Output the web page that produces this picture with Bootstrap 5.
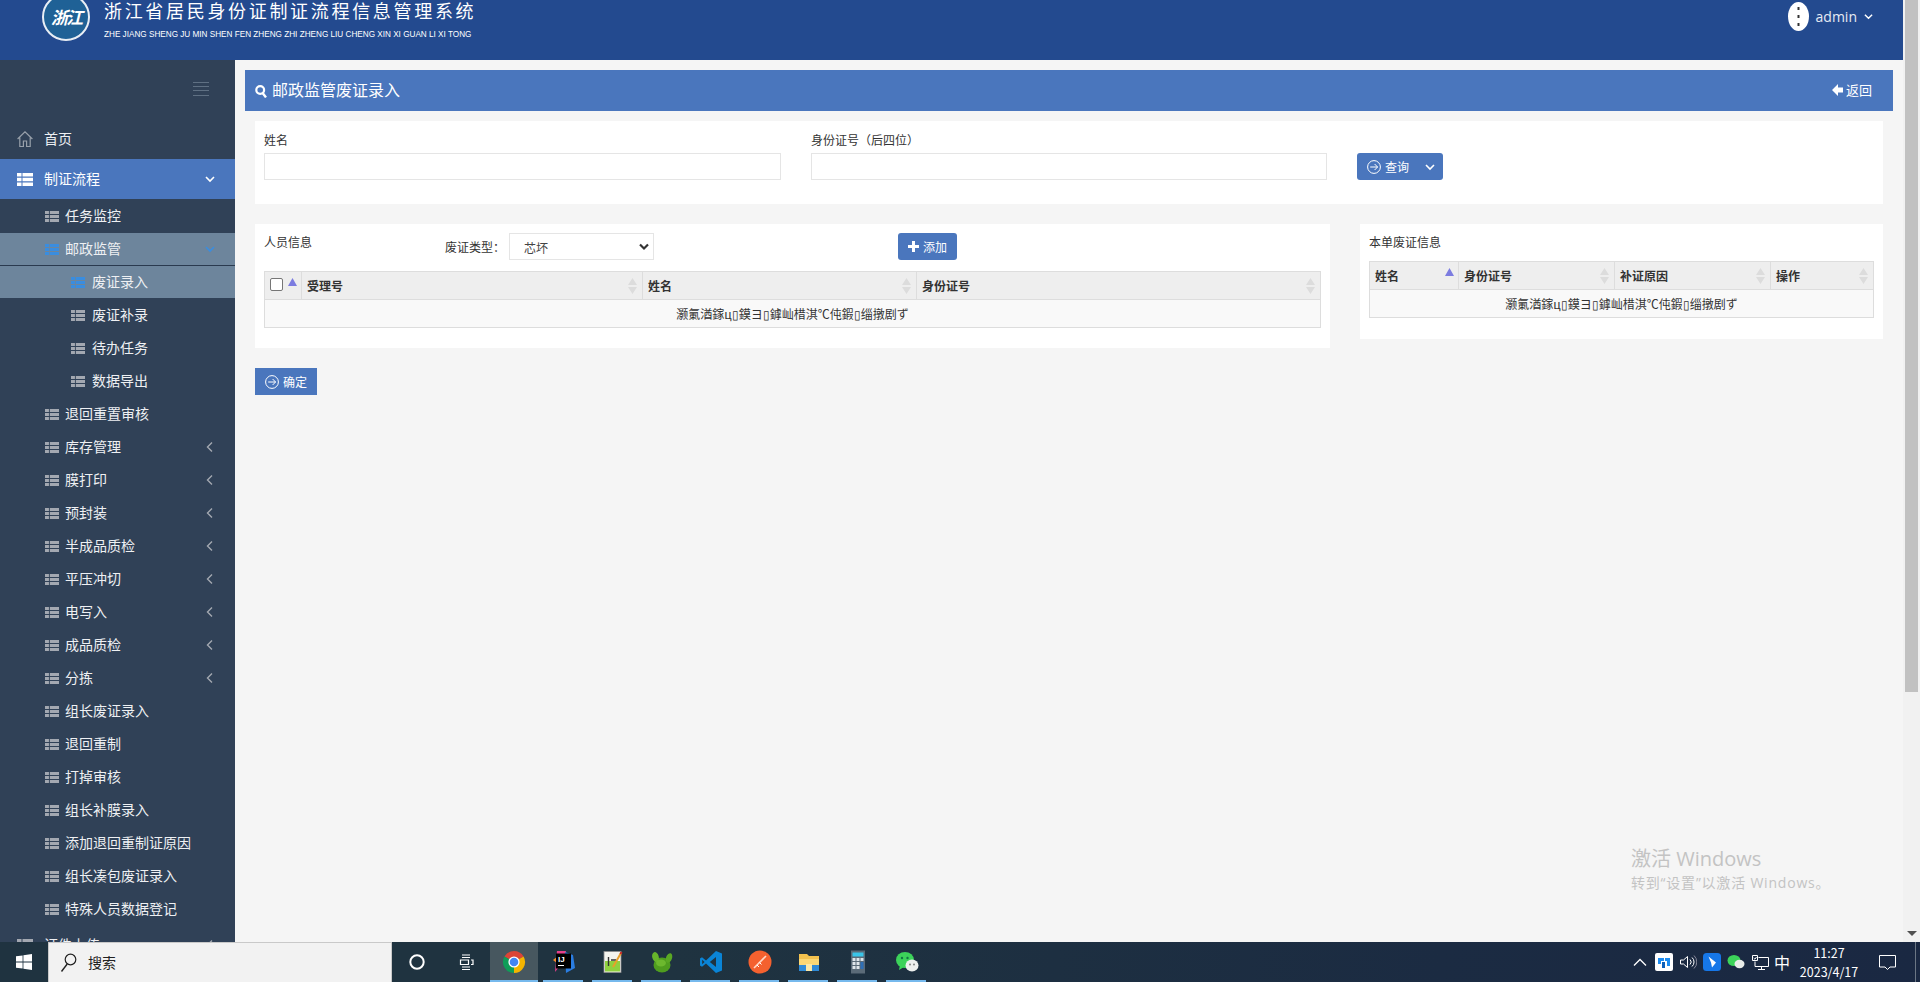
<!DOCTYPE html>
<html lang="zh-CN">
<head>
  <meta charset="UTF-8">
  <title>邮政监管废证录入</title>
  <meta name="viewport" content="width=device-width, initial-scale=1">
  <link href="https://cdn.jsdelivr.net/npm/bootstrap@5.3.0/dist/css/bootstrap.min.css" rel="stylesheet">
  <style>
    :root {
      --side-bg: #304157;
      --side-line: #2a3a4f;
      --brand: #4a76bd;
      --head-bg: #234a8f;
      --page-bg: #f5f5f5;
    }

    html, body { height: 100%; }

    body {
      font-family: "Noto Sans CJK SC", "Liberation Sans", sans-serif;
      font-size: 12px;
      color: #333;
      background: var(--page-bg);
      overflow: hidden;
    }

    /* page + fake browser scrollbar */
    .app-area { height: 942px; }
    .app-page { width: 1903px; }
    .sys-scroll { width: 17px; background: #f1f1f1; }
    .sys-thumb { height: 692px; margin: 0 2px; background: #c1c1c1; }
    .sys-arrow {
      width: 0; height: 0; margin: 0 auto 6px;
      border-left: 5px solid transparent;
      border-right: 5px solid transparent;
      border-top: 5px solid #505050;
    }

    /* top header */
    .app-head { height: 60px; background: var(--head-bg); color: #fff; overflow: hidden; flex: none; }
    .logo-disc {
      width: 48px; height: 48px; margin: -7px 14px 0 42px; flex: none;
      border: 2px solid #e8eef5; border-radius: 50%;
      background: #1f6196; color: #fff;
      font-size: 17px; font-weight: 700; font-style: italic; line-height: 44px;
      letter-spacing: -2px; text-align: center;
    }
    .sys-title { font-size: 18px; line-height: 22px; letter-spacing: 2.68px; white-space: nowrap; margin-top: -1px; }
    .sys-sub {
      font-family: "Liberation Sans", sans-serif; font-size: 9.5px; line-height: 12px; margin-top: 7px;
      white-space: nowrap; transform: scaleX(.86); transform-origin: left center;
    }
    .user-box { margin-right: 30px; margin-top: 2px; height: 29px; }
    .user-pic { width: 21px; height: 29px; border-radius: 50%; background: #fff; }
    .user-name { font-family: "Open Sans", sans-serif; font-size: 14px; margin: 0 7px 0 7px; color: #e6ebf3; }

    /* sidebar */
    .side-nav { width: 235px; flex: none; background: var(--side-bg); overflow: hidden; color: #eef0f3; font-size: 14px; }
    .side-toggle { height: 59px; padding: 22px 26px 0 0; }
    .side-row { height: 40px; padding-left: 17px; position: relative; }
    .side-row > span { margin-top: -2px; }
    .side-row .row-ico { width: 16px; height: 13px; margin-right: 11px; flex: none; }
    .side-row.on { background: var(--brand); color: #fff; }
    .side-row.on::after {
      content: ""; position: absolute; left: 100%; top: 0;
      border-top: 20px solid transparent; border-bottom: 20px solid transparent;
      border-left: 8px solid var(--brand);
    }
    .side-sub { height: 33px; border-top: 1px solid var(--side-bg); }
    .side-sub .row-ico { width: 14px; height: 11px; margin-right: 6px; flex: none; }
    .lvl-2 { padding-left: 45px; }
    .lvl-3 { padding-left: 71px; }
    .side-row.lvl-3 .row-ico { margin-right: 7px; }
    .side-sub.cur { background: #6d859c; }
    .side-sub.cur + .side-sub.cur { border-top-color: var(--side-line); }
    .ico-grey { color: #a3a8b1; }
    .ico-blue { color: #3a8ddf; }
    .ico-white { color: #fff; }
    .row-tail { position: absolute; left: 205px; width: 10px; height: 10px; }

    /* content */
    .work-area { padding: 10px 10px 0; position: relative; flex-grow: 1; }
    .title-bar { height: 41px; background: var(--brand); color: #fff; font-size: 16px; padding: 0 21px 0 10px; }
    .title-bar > span { margin-top: -3px; }
    .title-bar > svg { width: 12px; height: 14px; margin-right: 5px; }
    .back-link { font-size: 13px; color: #fff; text-decoration: none; margin-top: -1px; }
    .back-link svg { width: 11px; height: 12px; margin-right: 3px; }
    .blank-panel { background: #fff; margin-left: 10px; margin-right: 10px; }
    .query-panel { height: 83px; margin-top: 10px; padding: 10px 9px 0; gap: 30px; }
    .query-field { width: 517px; }
    .query-field + .query-field { width: 516px; }
    .query-field label { display: block; line-height: 17px; margin-bottom: 5px; }
    .plain-input { height: 27px; border: 1px solid #e5e5e5; border-radius: 0; padding: 0 8px; font-size: 12px; }
    .list-wrap { margin: 20px 10px 0; gap: 30px; }
    .list-wrap .blank-panel { margin: 0; }
    .person-panel { width: 1075px; height: 124px; padding: 9px; }
    .bill-panel { width: 523px; height: 115px; padding: 9px; }
    .panel-cap { line-height: 17px; }
    .bill-panel .panel-cap { margin-bottom: 11px; }
    .person-bar { height: 27px; margin-bottom: 11px; }
    .person-cap { width: 181px; }
    .type-label { width: 64px; }
    .type-pick {
      width: 145px; height: 27px; margin-left: 0; padding: 2px 24px 0 14px;
      border: 1px solid #e5e5e5; border-radius: 0; font-size: 12px; color: #444;
      background-image: url("data:image/svg+xml,%3csvg xmlns='http://www.w3.org/2000/svg' viewBox='0 0 10 8'%3e%3cpath fill='none' stroke='%23333' stroke-width='2.2' d='M1 1.5l4 4 4-4'/%3e%3c/svg%3e");
      background-size: 10px 8px; background-position: right 4px center;
    }
    .brand-btn {
      background: var(--brand); border: 0; color: #fff; font-size: 12px; height: 27px;
      padding: 0 10px; border-radius: 3px; white-space: nowrap;
    }
    .brand-btn:hover { background: var(--brand); color: #fff; }
    .brand-btn .go-ico { width: 14px; height: 14px; margin-right: 4px; flex: none; }
    .add-btn { margin-left: 244px; width: 59px; }
    .add-btn svg { width: 11px; height: 11px; margin-right: 4px; }
    .search-btn { width: 86px; margin-top: 22px; }
    .search-btn .fold-ico { width: 10px; height: 10px; margin-left: 16px; flex: none; }
    .ok-btn { width: 62px; margin: 20px 0 0 10px; border-radius: 0; }

    .data-table {
      --bs-table-border-color: #ddd;
      --bs-table-bg: transparent;
      table-layout: fixed; margin: 0; font-size: 12px; color: #333;
    }
    .data-table th, .data-table td { height: 28px; padding: 0 5px; vertical-align: middle; position: relative; border-width: 1px; }
    .data-table th { background: #eee; font-weight: 700; }
    .data-table td { background: #f9f9f9; text-align: center; white-space: nowrap; }
    .data-table .pick-box { margin: -6px 0 0 0; width: 13px; height: 13px; border-color: #767676; border-radius: 2px; vertical-align: middle; }
    .sort-mark { position: absolute; right: 5px; top: 6px; width: 9px; height: 16px; }
    .sort-up { right: 4px; top: 6px; width: 9px; height: 8px; }
    .person-table { width: 1057px; }
    .bill-table { width: 505px; }
    .p-c1 { width: 37px; } .p-c2 { width: 341px; } .p-c3 { width: 274px; }
    .b-c1 { width: 89px; } .b-c2 { width: 156px; } .b-c3 { width: 156px; }

    .activate-note { position: absolute; left: 1396px; top: 785px; color: #c3c3c3; font-family: "Open Sans", "Noto Sans CJK SC", sans-serif; font-size: 14px; line-height: 19px; letter-spacing: .8px; white-space: nowrap; }
    .activate-note b { display: block; font-weight: 400; font-size: 20px; line-height: 28px; letter-spacing: 0; }

    /* windows taskbar */
    .task-bar { height: 40px; background: linear-gradient(90deg, #1f3340, #1f3340 35%, #1b2b42 75%, #1a2842); color: #fff; }
    .win-key { width: 48px; }
    .win-key svg { width: 16px; height: 16px; }
    .find-box { width: 344px; background: #f2f2f2; border: 1px solid #c9c9c9; border-bottom: 0; color: #222; font-size: 14px; padding-left: 11px; }
    .find-box svg { width: 17px; height: 20px; margin-right: 11px; }
    .sys-tool { width: 49px; }
    .sys-tool svg { width: 16px; height: 16px; }
    .app-cell { width: 49px; height: 40px; position: relative; }
    .app-cell svg { width: 24px; height: 24px; }
    .app-cell::after { content: ""; position: absolute; bottom: 0; left: 4px; width: 40px; height: 2px; background: #76b9ed; }
    .app-cell.now { background: #47575f; margin-right: 1px; width: 48px; }
    .app-cell.now::after { left: 0; width: 48px; }
    .app-cell.ij-letter text { font-family: "Liberation Sans", sans-serif; }
    .tray-box { margin-left: auto; }
    .tray-ico { width: 24px; height: 40px; }
    .tray-ico svg { width: 18px; height: 18px; }
    .tray-lang { width: 20px; font-size: 16px; text-align: center; }
    .clock-box { width: 60px; margin-left: 7px; font-size: 12.5px; line-height: 19px; text-align: center; white-space: nowrap; }
    .note-ico { width: 56px; }
    .note-ico svg { width: 17px; height: 17px; }
    .show-desk { width: 5px; height: 40px; border-left: 1px solid #6b7684; }
  </style>
</head>
<body>

<svg width="0" height="0" class="d-none">
  <symbol id="ico-list" viewBox="0 0 16 13" preserveAspectRatio="none">
    <path fill="currentColor" d="M0 0h4.5v3.6H0zM5.5 0H16v3.6H5.5zM0 4.7h4.5v3.6H0zM5.5 4.7H16v3.6H5.5zM0 9.4h4.5V13H0zM5.5 9.4H16V13H5.5z"/>
  </symbol>
  <symbol id="ico-go" viewBox="0 0 14 14">
    <circle cx="7" cy="7" r="6.4" fill="none" stroke="currentColor" stroke-width="1"/>
    <path fill="none" stroke="currentColor" stroke-width="1" d="M3.2 7h7.4M7.6 4l3 3-3 3"/>
  </symbol>
  <symbol id="ico-down" viewBox="0 0 10 10">
    <path fill="none" stroke="currentColor" stroke-width="1.6" d="M1 3l4 4 4-4"/>
  </symbol>
  <symbol id="ico-left" viewBox="0 0 10 10">
    <path fill="none" stroke="currentColor" stroke-width="1.4" d="M7 0.5L2.5 5 7 9.5"/>
  </symbol>
  <symbol id="sort-both" viewBox="0 0 9 16">
    <path fill="#dcdcdc" d="M4.5 0L9 7H0zM0 9h9l-4.5 7z"/>
  </symbol>
  <symbol id="sort-asc" viewBox="0 0 9 8">
    <path fill="#7c7ce0" d="M4.5 0L9 8H0z"/>
  </symbol>
</svg>

<div class="app-area d-flex">
  <div class="app-page d-flex flex-column">
    <header class="app-head d-flex">
      <div class="logo-disc">浙江</div>
      <div class="flex-grow-1">
        <div class="sys-title">浙江省居民身份证制证流程信息管理系统</div>
        <div class="sys-sub">ZHE JIANG SHENG JU MIN SHEN FEN ZHENG ZHI ZHENG LIU CHENG XIN XI GUAN LI XI TONG</div>
      </div>
      <div class="user-box d-flex align-items-center">
        <svg class="user-pic" viewBox="0 0 21 29"><path fill="#333" d="M9.5 5h2v3h-2zM9.5 13h2v3h-2zM9.5 21h2v3h-2z"/></svg>
        <span class="user-name">admin</span>
        <svg width="9" height="9" class="ico-white"><use href="#ico-down"/></svg>
      </div>
    </header>

    <div class="d-flex flex-grow-1" style="min-height:0">
      <nav class="side-nav" id="sideNav">
        <div class="side-toggle d-flex justify-content-end">
          <svg width="16" height="14"><path stroke="#5f7083" stroke-width="1" d="M0 .5h16M0 4.5h16M0 8.5h16M0 13.5h16"/></svg>
        </div>
        <div class="side-row d-flex align-items-center">
          <svg class="row-ico" viewBox="0 0 16 16" style="height:16px"><path fill="none" stroke="#98a0aa" stroke-width="1.2" d="M.6 8L8 .8 15.4 8M2.8 6.5v9h3.6v-5.5h3.2v5.5h3.6v-9"/></svg>
          <span>首页</span>
        </div>
        <div class="side-row on d-flex align-items-center">
          <svg class="row-ico ico-white"><use href="#ico-list"/></svg>
          <span>制证流程</span>
          <svg class="row-tail ico-white"><use href="#ico-down"/></svg>
        </div>
        <div id="subRows"></div>
      </nav>

      <main class="work-area d-flex flex-column">
        <div class="title-bar d-flex align-items-center">
          <svg viewBox="0 0 12 14"><circle cx="5.2" cy="6" r="3.9" fill="none" stroke="#fff" stroke-width="2.2"/><path stroke="#fff" stroke-width="2.4" d="M7.6 9l3.4 4.4"/></svg>
          <span>邮政监管废证录入</span>
          <a href="#" class="back-link ms-auto d-flex align-items-center">
            <svg viewBox="0 0 11 12"><path fill="#fff" d="M0 6l6-6v3.5h5v5H6V12z"/></svg>返回
          </a>
        </div>

        <section class="blank-panel query-panel d-flex">
          <div class="query-field">
            <label for="qName">姓名</label>
            <input id="qName" class="form-control plain-input" type="text">
          </div>
          <div class="query-field">
            <label for="qCard">身份证号（后四位）</label>
            <input id="qCard" class="form-control plain-input" type="text">
          </div>
          <button class="btn brand-btn search-btn d-flex align-items-center" type="button">
            <svg class="go-ico"><use href="#ico-go"/></svg>查询
            <svg class="fold-ico"><use href="#ico-down"/></svg>
          </button>
        </section>

        <div class="list-wrap d-flex align-items-start">
          <section class="blank-panel person-panel">
            <div class="person-bar d-flex">
              <div class="panel-cap person-cap">人员信息</div>
              <div class="type-label d-flex align-items-center">废证类型：</div>
              <select class="form-select type-pick"><option>芯坏</option></select>
              <button class="btn brand-btn add-btn d-flex align-items-center" type="button">
                <svg viewBox="0 0 11 11"><path fill="#fff" d="M4 0h3v4h4v3H7v4H4V7H0V4h4z"/></svg>添加
              </button>
            </div>
            <table class="table table-bordered data-table person-table">
              <colgroup><col class="p-c1"><col class="p-c2"><col class="p-c3"><col></colgroup>
              <thead>
                <tr>
                  <th><input class="form-check-input pick-box" type="checkbox"><svg class="sort-mark sort-up"><use href="#sort-asc"/></svg></th>
                  <th>受理号<svg class="sort-mark"><use href="#sort-both"/></svg></th>
                  <th>姓名<svg class="sort-mark"><use href="#sort-both"/></svg></th>
                  <th>身份证号<svg class="sort-mark"><use href="#sort-both"/></svg></th>
                </tr>
              </thead>
              <tbody>
                <tr><td colspan="4">灏氭湭鎵ц▯鏌ヨ▯鎼屾棤淇℃伅鍜▯缁撴剧ず</td></tr>
              </tbody>
            </table>
          </section>

          <section class="blank-panel bill-panel">
            <div class="panel-cap">本单废证信息</div>
            <table class="table table-bordered data-table bill-table">
              <colgroup><col class="b-c1"><col class="b-c2"><col class="b-c3"><col></colgroup>
              <thead>
                <tr>
                  <th>姓名<svg class="sort-mark sort-up"><use href="#sort-asc"/></svg></th>
                  <th>身份证号<svg class="sort-mark"><use href="#sort-both"/></svg></th>
                  <th>补证原因<svg class="sort-mark"><use href="#sort-both"/></svg></th>
                  <th>操作<svg class="sort-mark"><use href="#sort-both"/></svg></th>
                </tr>
              </thead>
              <tbody>
                <tr><td colspan="4">灏氭湭鎵ц▯鏌ヨ▯鎼屾棤淇℃伅鍜▯缁撴剧ず</td></tr>
              </tbody>
            </table>
          </section>
        </div>

        <div>
          <button class="btn brand-btn ok-btn d-flex align-items-center" type="button">
            <svg class="go-ico"><use href="#ico-go"/></svg>确定
          </button>
        </div>

        <div class="activate-note"><b>激活 Windows</b>转到“设置”以激活 Windows。</div>
      </main>
    </div>
  </div>

  <div class="sys-scroll d-flex flex-column justify-content-between">
    <div class="sys-thumb"></div>
    <div class="sys-arrow"></div>
  </div>
</div>

<footer class="task-bar d-flex align-items-stretch">
  <div class="win-key d-flex align-items-center justify-content-center">
    <svg viewBox="0 0 16 16"><path fill="#fff" d="M0 2.3l6.6-.9v6.2H0zM7.4 1.3L16 0v7.6H7.4zM0 8.4h6.6v6.2L0 13.7zM7.4 8.4H16V16l-8.6-1.3z"/></svg>
  </div>
  <div class="find-box d-flex align-items-center">
    <svg viewBox="0 0 17 20"><circle cx="10.5" cy="6.5" r="5.3" fill="none" stroke="#222" stroke-width="1.2"/><path stroke="#222" stroke-width="1.4" d="M7.2 11L1.5 18.5"/></svg>
    搜索
  </div>
  <div class="sys-tool d-flex align-items-center justify-content-center">
    <svg viewBox="0 0 16 16"><circle cx="8" cy="8" r="6.7" fill="none" stroke="#fff" stroke-width="2"/></svg>
  </div>
  <div class="sys-tool d-flex align-items-center justify-content-center">
    <svg viewBox="0 0 16 16"><path fill="none" stroke="#fff" stroke-width="1.2" d="M4 1h8M4 3.5h8M2.5 6h8v4.5h-8zM4 13h8M4 15.5h8M13 6h2v4.5h-2"/></svg>
  </div>

  <div class="app-cell now d-flex align-items-center justify-content-center">
    <svg viewBox="0 0 24 24">
      <path fill="#db4437" d="M12 12L2.47 6.5A11 11 0 0 1 21.53 6.5z"/>
      <path fill="#f4b400" d="M12 12l9.53-5.5A11 11 0 0 1 12 23z"/>
      <path fill="#0f9d58" d="M12 12v11A11 11 0 0 1 2.47 6.5z"/>
      <circle cx="12" cy="12" r="5.6" fill="#fff"/><circle cx="12" cy="12" r="4.3" fill="#4285f4"/>
    </svg>
  </div>
  <div class="app-cell ij-letter d-flex align-items-center justify-content-center">
    <svg viewBox="0 0 24 24">
      <path fill="#e6418a" d="M5 1h9l-3 11-8 10z"/><path fill="#2a7de1" d="M13 2l8 3 2 13-9 5z"/><path fill="#f58b2a" d="M1 10l5-4v8z"/>
      <rect x="4" y="3.5" width="15" height="15" fill="#000"/>
      <text x="6" y="12" font-size="8" font-weight="700" fill="#fff">IJ</text><path stroke="#fff" d="M6 15.5h6"/>
    </svg>
  </div>
  <div class="app-cell d-flex align-items-center justify-content-center">
    <svg viewBox="0 0 24 24">
      <rect x="3" y="1.5" width="17" height="21" fill="#f4f4ee" stroke="#8a8a8a" stroke-width=".8"/>
      <rect x="4" y="11" width="15" height="10.5" fill="#8fd13f"/>
      <path stroke="#333" stroke-width="1.4" d="M7.5 7v9M10 10h5"/>
      <path stroke="#e8a02a" stroke-width="2" d="M12 17L20 3"/><path stroke="#c62828" stroke-width="2" d="M19.4 4l1.2-2"/>
    </svg>
  </div>
  <div class="app-cell d-flex align-items-center justify-content-center">
    <svg viewBox="0 0 24 24">
      <ellipse cx="12" cy="15" rx="8.5" ry="7.5" fill="#4f9d1f"/>
      <ellipse cx="5.5" cy="7" rx="3.3" ry="5" fill="#67b52b" transform="rotate(-15 5.5 7)"/>
      <ellipse cx="19" cy="8" rx="3" ry="5" fill="#5aa824" transform="rotate(20 19 8)"/>
      <ellipse cx="11" cy="13" rx="5" ry="3.5" fill="#6cb82e"/>
    </svg>
  </div>
  <div class="app-cell d-flex align-items-center justify-content-center">
    <svg viewBox="0 0 24 24">
      <path fill="#0a84d6" fill-rule="evenodd" d="M17 1L7 10.5 3 7.3 1 8.5v7l2 1.2 4-3.2L17 23l6-2.6V3.6zM17 7v10l-6.2-5zM3.2 9.8L5.6 12l-2.4 2.2z"/>
    </svg>
  </div>
  <div class="app-cell d-flex align-items-center justify-content-center">
    <svg viewBox="0 0 24 24">
      <circle cx="12" cy="12" r="11.5" fill="#f4612f"/>
      <path stroke="#ffd9c8" stroke-width="1.6" d="M6 18L18 6"/><path stroke="#fff" stroke-width="1" d="M9 15l2 2M11.5 12.5l2 2"/>
    </svg>
  </div>
  <div class="app-cell d-flex align-items-center justify-content-center">
    <svg viewBox="0 0 24 24">
      <path fill="#f2c14e" d="M2 4h8l2 2h10v5H2z"/><rect x="2" y="9" width="20" height="12" fill="#fbd774"/>
      <rect x="2" y="15" width="20" height="6" fill="#2f8ad6"/><rect x="9" y="14" width="6" height="7" fill="#f9e7a8"/>
    </svg>
  </div>
  <div class="app-cell d-flex align-items-center justify-content-center">
    <svg viewBox="0 0 24 24">
      <rect x="5" y="0.5" width="14" height="23" fill="#5b6b78"/><rect x="6.5" y="2.5" width="11" height="4" fill="#39c4e8"/>
      <path fill="#dfe5ea" d="M6.5 8h3v3h-3zM10.5 8h3v3h-3zM14.5 8h3v3h-3zM6.5 12h3v3h-3zM10.5 12h3v3h-3zM6.5 16h3v3h-3zM10.5 16h3v3h-3z"/>
      <rect x="14.5" y="12" width="3" height="7" fill="#2f6fb5"/>
    </svg>
  </div>
  <div class="app-cell d-flex align-items-center justify-content-center">
    <svg viewBox="0 0 24 24">
      <ellipse cx="10" cy="10" rx="9" ry="8" fill="#3cd35a"/><path fill="#3cd35a" d="M5 15l-1 5 5-3z"/>
      <ellipse cx="17" cy="15.5" rx="6.5" ry="6" fill="#eef0ee"/>
      <circle cx="7" cy="8" r="1.2" fill="#174"/><circle cx="12.5" cy="8" r="1.2" fill="#174"/>
      <circle cx="15" cy="14.5" r=".9" fill="#777"/><circle cx="19" cy="14.5" r=".9" fill="#777"/>
    </svg>
  </div>

  <div class="tray-box d-flex align-items-center">
    <div class="tray-ico d-flex align-items-center justify-content-center">
      <svg viewBox="0 0 18 18"><path fill="none" stroke="#fff" stroke-width="1.3" d="M3 12.5l6-6 6 6"/></svg>
    </div>
    <div class="tray-ico d-flex align-items-center justify-content-center">
      <svg viewBox="0 0 18 18"><rect width="18" height="18" rx="2" fill="#fff"/><path fill="#1d8cf0" d="M3 5h6v3H6v3H3zM10 5h5v8h-3V8h-2z"/><path fill="#0d5fb8" d="M7 9h3v6H7z"/></svg>
    </div>
    <div class="tray-ico d-flex align-items-center justify-content-center">
      <svg viewBox="0 0 18 18"><path fill="none" stroke="#fff" d="M1.5 7h3l4-3.5v11L4.5 11h-3zM11 6.5a3.5 3.5 0 0 1 0 5M13 4.5a6 6 0 0 1 0 9"/><path fill="none" stroke="#889" d="M15 2.5a9 9 0 0 1 0 13"/></svg>
    </div>
    <div class="tray-ico d-flex align-items-center justify-content-center">
      <svg viewBox="0 0 18 18"><rect width="18" height="18" rx="3.5" fill="#1677e8"/><path fill="#fff" d="M5.5 3.5l7.5 6-4 5-1-5z"/></svg>
    </div>
    <div class="tray-ico d-flex align-items-center justify-content-center">
      <svg viewBox="0 0 18 18"><ellipse cx="7" cy="7.5" rx="6.5" ry="5.5" fill="#3cd35a"/><ellipse cx="12.5" cy="11" rx="5" ry="4.2" fill="#e9ece9"/></svg>
    </div>
    <div class="tray-ico d-flex align-items-center justify-content-center">
      <svg viewBox="0 0 18 18"><path fill="none" stroke="#fff" d="M1.5 2.5h5v5h-5zM7.5 4.5h10v9H4v-5M10.5 13.5v3M7 16.5h7"/><path fill="none" stroke="#fff" d="M2.7 5l1.2 1.2 1.6-2.2"/></svg>
    </div>
    <div class="tray-lang">中</div>
    <div class="clock-box">11:27<br>2023/4/17</div>
    <div class="note-ico d-flex align-items-center justify-content-center">
      <svg viewBox="0 0 17 17"><path fill="none" stroke="#fff" d="M.5 1.5h16v11.5h-5.5L8.5 15.5 6 13H.5z"/></svg>
    </div>
    <div class="show-desk"></div>
  </div>
</footer>

<script>
  // sub rows of the open "制证流程" group
  const rows = [
    { t: "任务监控", l: 2 },
    { t: "邮政监管", l: 2, open: true },
    { t: "废证录入", l: 3, cur: true },
    { t: "废证补录", l: 3 },
    { t: "待办任务", l: 3 },
    { t: "数据导出", l: 3 },
    { t: "退回重置审核", l: 2 },
    { t: "库存管理", l: 2, more: true },
    { t: "膜打印", l: 2, more: true },
    { t: "预封装", l: 2, more: true },
    { t: "半成品质检", l: 2, more: true },
    { t: "平压冲切", l: 2, more: true },
    { t: "电写入", l: 2, more: true },
    { t: "成品质检", l: 2, more: true },
    { t: "分拣", l: 2, more: true },
    { t: "组长废证录入", l: 2 },
    { t: "退回重制", l: 2 },
    { t: "打掉审核", l: 2 },
    { t: "组长补膜录入", l: 2 },
    { t: "添加退回重制证原因", l: 2 },
    { t: "组长凑包废证录入", l: 2 },
    { t: "特殊人员数据登记", l: 2 }
  ];

  let html = "";
  rows.forEach(r => {
    const lit = r.cur || r.open;
    let tail = "";
    if (r.open) tail = '<svg class="row-tail ico-blue"><use href="#ico-down"/></svg>';
    if (r.more) tail = '<svg class="row-tail ico-grey"><use href="#ico-left"/></svg>';
    html += `<div class="side-row side-sub lvl-${r.l} ${lit ? "cur" : ""} d-flex align-items-center">
      <svg class="row-ico ${lit ? "ico-blue" : "ico-grey"}"><use href="#ico-list"/></svg><span>${r.t}</span>${tail}</div>`;
  });
  html += `<div class="side-row d-flex align-items-center">
    <svg class="row-ico ico-grey"><use href="#ico-list"/></svg><span>证件上传</span>
    <svg class="row-tail ico-grey"><use href="#ico-left"/></svg></div>`;
  document.getElementById("subRows").innerHTML = html;
</script>
</body>
</html>
